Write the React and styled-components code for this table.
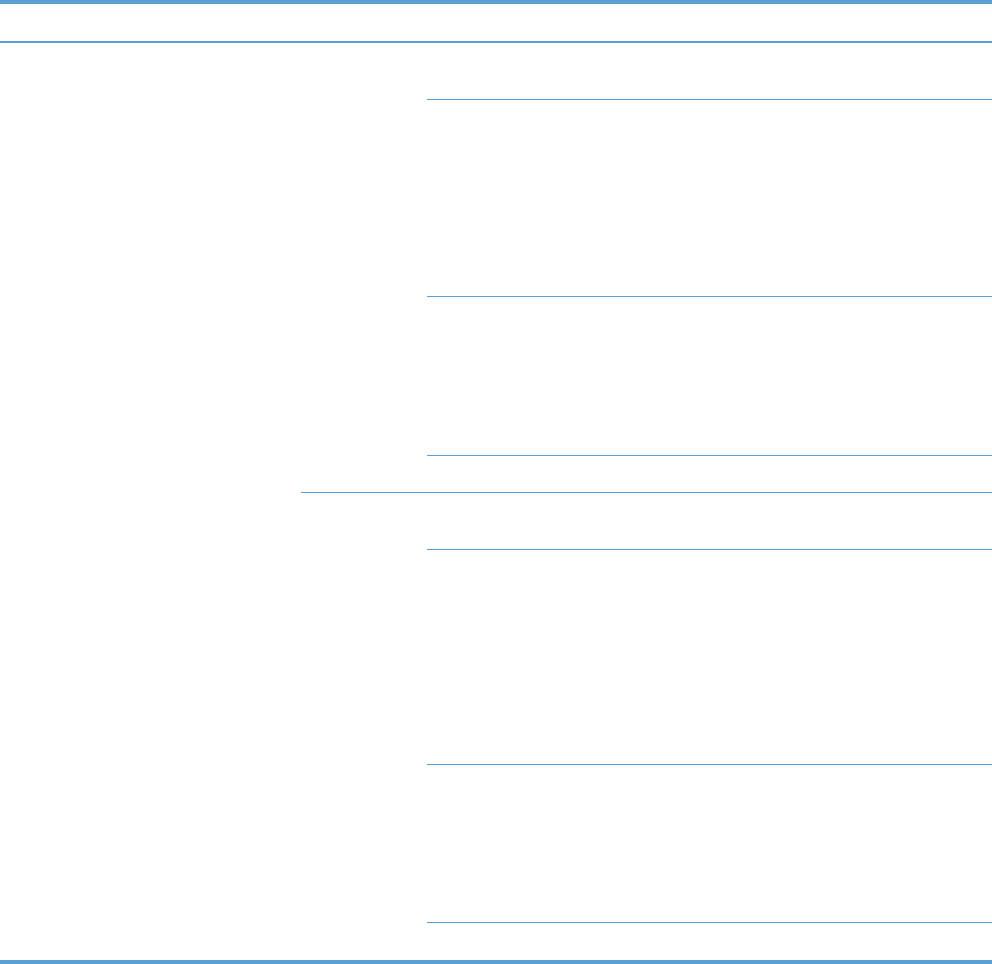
import React from 'react'
import styled, { createGlobalStyle } from 'styled-components'

const rule = '#5aa0d4'

const groups = [
  { rows: [56, 196, 158, 36] },
  { rows: [56, 214, 157, 37] },
]

function App() {
  return (
    <>
      <GlobalStyle />
      <Table>
        <Header>
          <HeadCell $w={301} />
          <HeadCell $w={126} />
          <HeadCell />
        </Header>
        <Body>
          <FirstCol />
          <Groups>
            {groups.map((g, i) => (
              <Group key={i} $last={i === groups.length - 1}>
                <MidCol />
                <Rows>
                  {g.rows.map((h, j) => (
                    <Row key={j} $h={h} $last={j === g.rows.length - 1} />
                  ))}
                </Rows>
              </Group>
            ))}
          </Groups>
        </Body>
      </Table>
    </>
  )
}

export default App

const GlobalStyle = createGlobalStyle`
body {
  margin: 0;
  background: #ffffff;
  font-family: "Liberation Sans", Arial, sans-serif;
}
`

const Table = styled.div`
width: 992px;
border-top: 4px solid ${rule};
border-bottom: 4px solid ${rule};
`

const Header = styled.div`
display: flex;
height: 37px;
border-bottom: 2px solid ${rule};
`

const HeadCell = styled.div`
width: ${p => (p.$w ? p.$w + 'px' : 'auto')};
flex: ${p => (p.$w ? 'none' : '1')};
`

const Body = styled.div`
display: flex;
`

const FirstCol = styled.div`
width: 301px;
flex: none;
`

const Groups = styled.div`
flex: 1;
display: flex;
flex-direction: column;
`

const Group = styled.div`
display: flex;
border-bottom: ${p => (p.$last ? 'none' : `1px solid ${rule}`)};
`

const MidCol = styled.div`
width: 126px;
flex: none;
`

const Rows = styled.div`
flex: 1;
display: flex;
flex-direction: column;
`

const Row = styled.div`
height: ${p => p.$h}px;
border-bottom: ${p => (p.$last ? 'none' : `1px solid ${rule}`)};
`
